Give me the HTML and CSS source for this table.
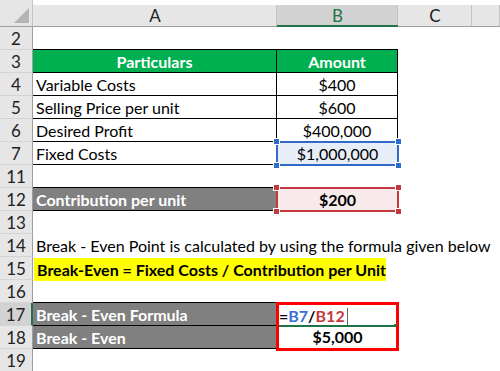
FILE: index.html
```html
<!DOCTYPE html>
<html>
<head>
<meta charset="utf-8">
<link rel="stylesheet" href="styles.css">
</head>
<body>
<div class="sheet">
  <div class="hdr corner"><span class="tri"></span></div>
  <div class="hdr col">A</div>
  <div class="hdr col sel">B</div>
  <div class="hdr col">C</div>
  <div class="hdr col last"></div>

  <div class="rh">2</div>
  <div class="c bb"></div><div class="c bb"></div><div class="c"></div><div class="c"></div>

  <div class="rh">3</div>
  <div class="c green bb br ctr">Particulars</div>
  <div class="c green bb br ctr">Amount</div>
  <div class="c"></div><div class="c"></div>

  <div class="rh">4</div>
  <div class="c bb br">Variable Costs</div>
  <div class="c bb br ctr">$400</div>
  <div class="c"></div><div class="c"></div>

  <div class="rh">5</div>
  <div class="c bb br">Selling Price per unit</div>
  <div class="c bb br ctr">$600</div>
  <div class="c"></div><div class="c"></div>

  <div class="rh">6</div>
  <div class="c bb br">Desired Profit</div>
  <div class="c bb br ctr">$400,000</div>
  <div class="c"></div><div class="c"></div>

  <div class="rh">7</div>
  <div class="c bb br">Fixed Costs</div>
  <div class="c bb br ctr picked blue">$1,000,000<i class="h tl"></i><i class="h tr"></i><i class="h bl"></i><i class="h br2"></i></div>
  <div class="c"></div><div class="c"></div>

  <div class="rh">11</div>
  <div class="c bb"></div><div class="c"></div><div class="c"></div><div class="c"></div>

  <div class="rh">12</div>
  <div class="c gray bb">Contribution per unit</div>
  <div class="c ctr bold picked red">$200<i class="h tl"></i><i class="h tr"></i><i class="h bl"></i><i class="h br2"></i></div>
  <div class="c"></div><div class="c"></div>

  <div class="rh">13</div>
  <div class="c"></div><div class="c"></div><div class="c"></div><div class="c"></div>

  <div class="rh">14</div>
  <div class="c span">Break - Even Point is calculated by using the formula given below</div>

  <div class="rh">15</div>
  <div class="c span"><span class="hl">Break-Even = Fixed Costs / Contribution per Unit</span></div>

  <div class="rh">16</div>
  <div class="c bb"></div><div class="c"></div><div class="c"></div><div class="c"></div>

  <div class="rh act">17</div>
  <div class="c gray bb">Break - Even Formula</div>
  <div class="c bold box top">=<span class="ref1">B7</span>/<span class="ref2">B12</span><span class="caret"></span><span class="edit"></span></div>
  <div class="c"></div><div class="c"></div>

  <div class="rh">18</div>
  <div class="c gray bb">Break - Even</div>
  <div class="c bold ctr box bot">$5,000</div>
  <div class="c"></div><div class="c"></div>

  <div class="rh">19</div>
  <div class="c"></div><div class="c"></div><div class="c"></div><div class="c"></div>
</div>
</body>
</html>
```

FILE: styles.css
```css
html, body {
  margin: 0;
  padding: 0;
  background: #fff;
}
.sheet {
  display: grid;
  grid-template-columns: 33px 244px 121px 74px 28px;
  grid-template-rows: 27px repeat(15, 23px);
  width: 500px;
  height: 371px;
  overflow: hidden;
  font-family: "Lato", "Liberation Sans", sans-serif;
  font-size: 16px;
  color: #000;
}
.hdr {
  background: #e6e6e6;
  border-bottom: 1px solid #9e9e9e;
  box-sizing: border-box;
  padding-top: 5px;
  color: #222;
  font-size: 17px;
}
.hdr.col {
  display: flex;
  align-items: center;
  justify-content: center;
  background-clip: content-box;
  position: relative;
}
.hdr.col::after {
  content: "";
  position: absolute;
  right: 0;
  top: 5px;
  bottom: 0;
  width: 1px;
  background: #c4c4c4;
}
.hdr.col.sel {
  background-color: #d2d2d2;
  border-bottom: 2px solid #217346;
  color: #217346;
}
.corner {
  position: relative;
  border-right: 1px solid #c4c4c4;
}
.tri {
  position: absolute;
  right: 3px;
  bottom: 3px;
  width: 0;
  height: 0;
  border-left: 15px solid transparent;
  border-bottom: 15px solid #b4b4b4;
}
.rh {
  background: #e6e6e6;
  border-right: 1px solid #9e9e9e;
  border-bottom: 1px solid #d4d4d4;
  box-sizing: border-box;
  text-align: center;
  line-height: 24px;
  color: #222;
  font-size: 17px;
}
.rh.act {
  background: #d2d2d2;
  border-right: 2px solid #217346;
}
.c {
  box-sizing: border-box;
  line-height: 24px;
  padding: 0 3px;
  white-space: nowrap;
  position: relative;
}
.bb { border-bottom: 1px solid #000; }
.br { border-right: 1px solid #000; }
.ctr { text-align: center; }
.bold { font-weight: bold; }
.green {
  background: #00b050;
  color: #fff;
  font-weight: bold;
}
.gray {
  background: #808080;
  color: #fff;
  font-weight: bold;
}
.span {
  grid-column: 2 / -1;
  overflow: visible;
}
.hl {
  display: inline-block;
  background: #ffff00;
  font-weight: bold;
  margin-left: -2px;
  padding: 0 4px 0 3px;
  width: 352px;
  box-sizing: border-box;
  line-height: 23px;
  margin-top: 1px;
}
.picked {
  margin: -1px -1px -1px -1px;
  border: 2px solid;
  line-height: 21px;
}
.picked.blue {
  border-color: #2f6bc7;
  background: #e8eef8;
}
.picked.red {
  border-color: #c4383e;
  background: #f8eaea;
}
.h {
  position: absolute;
  width: 5px;
  height: 5px;
  border: 1px solid #fff;
}
.blue .h { background: #2f6bc7; }
.red .h { background: #c4383e; }
.h.tl { left: -5px; top: -5px; }
.h.tr { right: -5px; top: -5px; }
.h.bl { left: -5px; bottom: -5px; }
.h.br2 { right: -5px; bottom: -5px; }
.box {
  border-left: 3px solid #ff0000;
  border-right: 3px solid #ff0000;
  margin-left: -1px;
  margin-right: -1px;
}
.box.top {
  border-top: 3px solid #ff0000;
  margin-top: -1px;
  padding-left: 0;
  line-height: 21px;
}
.box.bot {
  border-bottom: 3px solid #ff0000;
  margin-bottom: -2px;
  line-height: 22px;
}
.ref1 { color: #3a6fd4; }
.ref2 { color: #c8373d; }
.caret {
  display: inline-block;
  width: 1px;
  height: 17px;
  background: #666;
  vertical-align: -3px;
  margin-left: 2px;
}
.edit {
  position: absolute;
  left: 0;
  right: -1px;
  bottom: -1px;
  height: 2px;
  background: #217346;
}
.edit::after {
  content: "";
  position: absolute;
  right: 0;
  top: -1px;
  width: 3px;
  height: 3px;
  background: #217346;
}
```
